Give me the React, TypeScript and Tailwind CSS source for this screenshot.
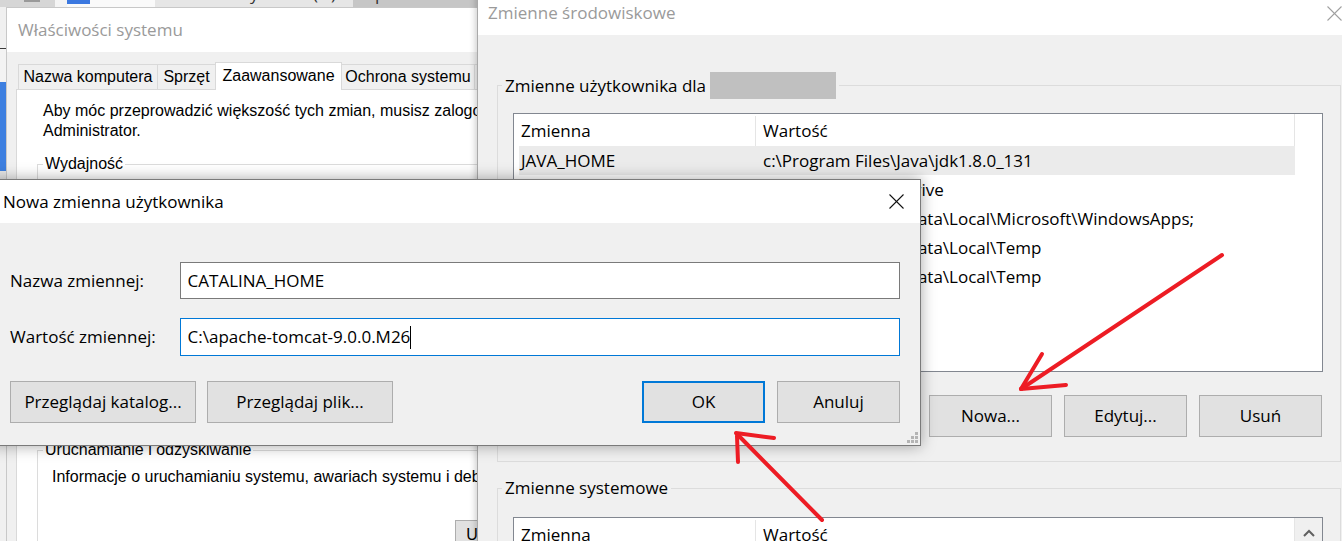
import React from "react";

function WinBtn({ children, className = "" }: { children: React.ReactNode; className?: string }) {
  return (
    <div className={`flex items-center justify-center bg-[#e1e1e1] border border-[#adadad] text-[17px] leading-[24px] text-black ${className}`}>
      {children}
    </div>
  );
}

function CloseX({ color, size = 15 }: { color: string; size?: number }) {
  return (
    <svg width={size} height={size} viewBox="0 0 15 15">
      <line x1="0.5" y1="0.5" x2="14.5" y2="14.5" stroke={color} strokeWidth="1.1" />
      <line x1="14.5" y1="0.5" x2="0.5" y2="14.5" stroke={color} strokeWidth="1.1" />
    </svg>
  );
}

function TopStrip() {
  return (
    <div className="absolute left-0 top-0 w-[477px] h-[7px] overflow-hidden flex">
      <div className="w-[55px] h-full bg-[#d6d6d6] relative">
        <div className="absolute left-[24px] top-0 w-[16px] h-[2px] bg-[#9a9a9a]" />
      </div>
      <div className="w-[12px] h-full bg-[#f4f4f4]" />
      <div className="w-[23px] h-full bg-[#fafafa] flex flex-col">
        <div className="h-[4px] bg-[#3b78e0]" />
      </div>
      <div className="w-[65px] h-full bg-[#fafafa]" />
      <div className="w-[198px] h-full bg-[#e6e6e6] relative">
        <span className="absolute left-[95px] top-[-18px] text-[17px] leading-[24px] text-[#333]">y</span>
        <span className="absolute left-[158px] top-[-18px] text-[17px] leading-[24px] text-[#333]">(</span>
        <span className="absolute left-[176px] top-[-18px] text-[17px] leading-[24px] text-[#333]">)</span>
      </div>
      <div className="w-[124px] h-full bg-[#c6c6c6] relative">
        <span className="absolute left-[22px] top-[-18px] text-[17px] leading-[24px] text-[#333]">p</span>
      </div>
    </div>
  );
}

function LeftStrip() {
  return (
    <div className="absolute left-0 top-[7px] w-[6px] h-[172px] flex flex-col">
      <div className="h-[41px] bg-[#f0f0f0]" />
      <div className="h-[1px] bg-[#3a3a3a]" />
      <div className="h-[33px] bg-[#f3f3f3]" />
      <div className="h-[89px] bg-[#3d7fe0]" />
      <div className="flex-1 bg-[#e6e6e6]" />
    </div>
  );
}

function SystemPropertiesWindow() {
  const classic = "font-['Liberation_Sans',Arial,sans-serif]";
  return (
    <div className="absolute left-[6px] top-[7px] w-[600px] h-[600px] border border-[#c8c8c8] bg-[#f0f0f0] flex flex-col">
      <div className="h-[44px] bg-white flex items-center pl-[11px] text-[17px] text-[#9a9a9a] shrink-0">
        Właściwości systemu
      </div>
      <div className={`flex-1 flex flex-col pl-[9px] pt-[10px] ${classic}`}>
        <div className="flex items-end h-[27px] ml-[2px] text-[16px] leading-[20px]">
          <div className="w-[139px] h-[25px] border-l border-t border-[#d9d9d9] flex items-center justify-center">
            Nazwa komputera
          </div>
          <div className="w-[58px] h-[25px] border-l border-t border-[#d9d9d9] flex items-center justify-center">
            Sprzęt
          </div>
          <div className="w-[127px] h-[28px] -mb-px border-l border-t border-r border-[#d9d9d9] bg-white relative z-10 flex items-center justify-center pb-[2px]">
            Zaawansowane
          </div>
          <div className="w-[133px] h-[25px] border-t border-r border-[#d9d9d9] flex items-center justify-center">
            Ochrona systemu
          </div>
          <div className="w-[60px] h-[25px] border-t border-r border-[#d9d9d9]" />
        </div>
        <div className="flex-1 border border-[#d9d9d9] bg-white pl-[20px] pt-[11px] text-[16px] leading-[20px]">
          <div className="pl-[6px] whitespace-nowrap">
            <div>Aby móc przeprowadzić większość tych zmian, musisz zalogować się jako</div>
            <div>Administrator.</div>
          </div>
          <fieldset className="mt-[13px] w-[540px] h-[102px] border border-[#dcdcdc]">
            <legend className="ml-[5px] px-[2px] leading-[20px]">Wydajność</legend>
            <div className="pl-[14px] pt-[7px]">Efekty wizualne, planowanie procesora, użycie pamięci i pamięć wirtualna</div>
          </fieldset>
          <fieldset className="mt-[12px] w-[540px] h-[160px] border border-[#dcdcdc]">
            <legend className="ml-[5px] px-[2px] leading-[20px]">Profile użytkownika</legend>
            <div className="pl-[14px] pt-[7px]">Ustawienia pulpitu związane z logowaniem</div>
          </fieldset>
          <fieldset className="mt-[12px] w-[540px] h-[140px] border border-[#dcdcdc]">
            <legend className="ml-[5px] px-[2px] leading-[20px]">Uruchamianie i odzyskiwanie</legend>
            <div className="pl-[14px] pt-[7px] whitespace-nowrap">
              Informacje o uruchamianiu systemu, awariach systemu i debugowaniu
            </div>
            <div className="mt-[33px] ml-[417px] w-[114px] h-[30px] bg-[#e1e1e1] border border-[#adadad] flex items-center justify-center">
              Ustawienia...
            </div>
          </fieldset>
        </div>
      </div>
    </div>
  );
}

type Row = { name: string; value: string; selected?: boolean };

function ListHeader() {
  return (
    <div className="h-[32px] flex border-r border-[#e5e5e5] shrink-0 pt-[2px]">
      <div className="w-[242px] pl-[7px] border-r border-[#e5e5e5] flex items-center">Zmienna</div>
      <div className="pl-[7px] flex items-center">Wartość</div>
    </div>
  );
}

function EnvWindow() {
  const userRows: Row[] = [
    { name: "JAVA_HOME", value: "c:\\Program Files\\Java\\jdk1.8.0_131", selected: true },
    { name: "OneDrive", value: "C:\\Users\\Ola\\OneDrive" },
    { name: "Path", value: "C:\\Users\\Ewa\\AppData\\Local\\Microsoft\\WindowsApps;" },
    { name: "TEMP", value: "C:\\Users\\Ewa\\AppData\\Local\\Temp" },
    { name: "TMP", value: "C:\\Users\\Ewa\\AppData\\Local\\Temp" },
  ];
  return (
    <div className="absolute left-[477px] top-[-9px] w-[880px] h-[620px] border-l border-[#a9a9a9] bg-[#f0f0f0] shadow-[-2px_0_6px_rgba(0,0,0,0.18)] flex flex-col text-[17px] leading-[24px]">
      <div className="h-[44px] bg-white flex items-center justify-between pl-[10px] shrink-0">
        <span className="text-[#9a9a9a]">Zmienne środowiskowe</span>
        <div className="w-[46px] h-full flex items-center justify-center">
          <CloseX color="#a0a0a0" />
        </div>
      </div>
      <div className="pl-[19px] pt-[37px]">
        <fieldset className="w-[844px] border border-[#dcdcdc] pl-[15px] pr-[17px] pt-[14px] pb-[24px]">
          <legend className="-ml-[11px] px-[3px] leading-[27px] whitespace-nowrap">
            Zmienne użytkownika dla
            <span className="inline-block align-top ml-[4px] w-[126px] h-[27px] bg-[#c0c0c0]" />
          </legend>
          <div className="w-[810px] h-[259px] border border-[#828790] bg-white flex">
            <div className="w-[781px] flex flex-col">
              <ListHeader />
              {userRows.map((r) => (
                <div
                  key={r.name}
                  className={`ml-[5px] h-[29px] flex items-center whitespace-nowrap pt-[1px] ${r.selected ? "bg-[#ebebeb]" : ""}`}
                >
                  <div className="w-[237px] pl-[2px]">{r.name}</div>
                  <div className="pl-[7px]">{r.value}</div>
                </div>
              ))}
            </div>
          </div>
          <div className="mt-[23px] flex justify-end gap-[12px] pr-[1px]">
            <WinBtn className="w-[123px] h-[42px]">Nowa...</WinBtn>
            <WinBtn className="w-[123px] h-[42px]">Edytuj...</WinBtn>
            <WinBtn className="w-[123px] h-[42px]">Usuń</WinBtn>
          </div>
        </fieldset>
        <fieldset className="mt-[16px] w-[844px] h-[200px] border border-[#dcdcdc] pl-[15px] pr-[17px] pt-[19px]">
          <legend className="-ml-[11px] px-[3px] leading-[20px]">Zmienne systemowe</legend>
          <div className="w-[810px] h-[200px] border border-[#828790] bg-white flex">
            <div className="w-[781px] flex flex-col">
              <ListHeader />
              <div className="ml-[5px] h-[29px] flex items-center whitespace-nowrap">
                <div className="w-[237px] pl-[2px]">ComSpec</div>
                <div className="pl-[7px]">C:\WINDOWS\system32\cmd.exe</div>
              </div>
            </div>
            <div className="flex-1 bg-[#f0f0f0] flex flex-col items-center">
              <div className="h-[30px] w-full flex items-center justify-center">
                <svg width="12" height="8" viewBox="0 0 12 8">
                  <polyline points="1,7 6,2 11,7" fill="none" stroke="#606060" strokeWidth="2" />
                </svg>
              </div>
            </div>
          </div>
        </fieldset>
      </div>
    </div>
  );
}

function NewVarDialog() {
  return (
    <div className="absolute left-[-10px] top-[179px] w-[931px] h-[267px] border border-[#7a7a7a] bg-[#f0f0f0] shadow-[0_0_14px_rgba(0,0,0,0.35)] flex flex-col text-[17px] leading-[24px]">
      <div className="h-[43px] bg-white flex items-center justify-between pl-[12px] shrink-0">
        <span>Nowa zmienna użytkownika</span>
        <div className="w-[48px] h-full flex items-center justify-center">
          <CloseX color="#111" />
        </div>
      </div>
      <div className="pl-[19px] pr-[20px] pt-[39px] flex flex-col">
        <div className="flex items-center">
          <div className="w-[170px]">Nazwa zmiennej:</div>
          <div className="w-[722px] h-[37px] border border-[#7a7a7a] bg-white pl-[7px] flex items-center">
            CATALINA_HOME
          </div>
        </div>
        <div className="flex items-center mt-[19px]">
          <div className="w-[170px]">Wartość zmiennej:</div>
          <div className="w-[722px] h-[38px] border border-[#0078d7] bg-white pl-[7px] flex items-center">
            C:\apache-tomcat-9.0.0.M26
            <span className="inline-block w-px h-[23px] bg-black" />
          </div>
        </div>
        <div className="flex mt-[25px]">
          <WinBtn className="w-[186px] h-[42px]">Przeglądaj katalog...</WinBtn>
          <WinBtn className="w-[186px] h-[42px] ml-[11px]">Przeglądaj plik...</WinBtn>
          <div className="flex-1" />
          <div className="w-[123px] h-[42px] flex items-center justify-center bg-[#e1e1e1] border-2 border-[#0078d7]">
            OK
          </div>
          <WinBtn className="w-[123px] h-[42px] ml-[12px]">Anuluj</WinBtn>
        </div>
      </div>
      <svg className="absolute right-[2px] bottom-[2px]" width="11" height="11" viewBox="0 0 11 11">
        <rect x="8" y="0" width="3" height="3" fill="#b4b4b4" />
        <rect x="4" y="4" width="3" height="3" fill="#b4b4b4" />
        <rect x="8" y="4" width="3" height="3" fill="#b4b4b4" />
        <rect x="0" y="8" width="3" height="3" fill="#b4b4b4" />
        <rect x="4" y="8" width="3" height="3" fill="#b4b4b4" />
        <rect x="8" y="8" width="3" height="3" fill="#b4b4b4" />
      </svg>
    </div>
  );
}

function Arrows() {
  const red = "#ed1c24";
  return (
    <svg className="absolute left-0 top-0 pointer-events-none" width="1342" height="541" viewBox="0 0 1342 541">
      <g stroke={red} strokeWidth="4" strokeLinecap="round" fill="none">
        <line x1="1222" y1="255" x2="1021" y2="389" />
        <line x1="1021" y1="389" x2="1042" y2="354" />
        <line x1="1021" y1="389" x2="1066" y2="385" />
        <line x1="822" y1="520" x2="737" y2="434" />
        <line x1="736" y1="433" x2="774" y2="438" />
        <line x1="737" y1="436" x2="738" y2="462" />
      </g>
    </svg>
  );
}

export default function App() {
  return (
    <div className="relative w-[1342px] h-[541px] overflow-hidden bg-[#f0f0f0] font-['Open_Sans',sans-serif] text-black">
      <TopStrip />
      <LeftStrip />
      <SystemPropertiesWindow />
      <EnvWindow />
      <NewVarDialog />
      <Arrows />
    </div>
  );
}
